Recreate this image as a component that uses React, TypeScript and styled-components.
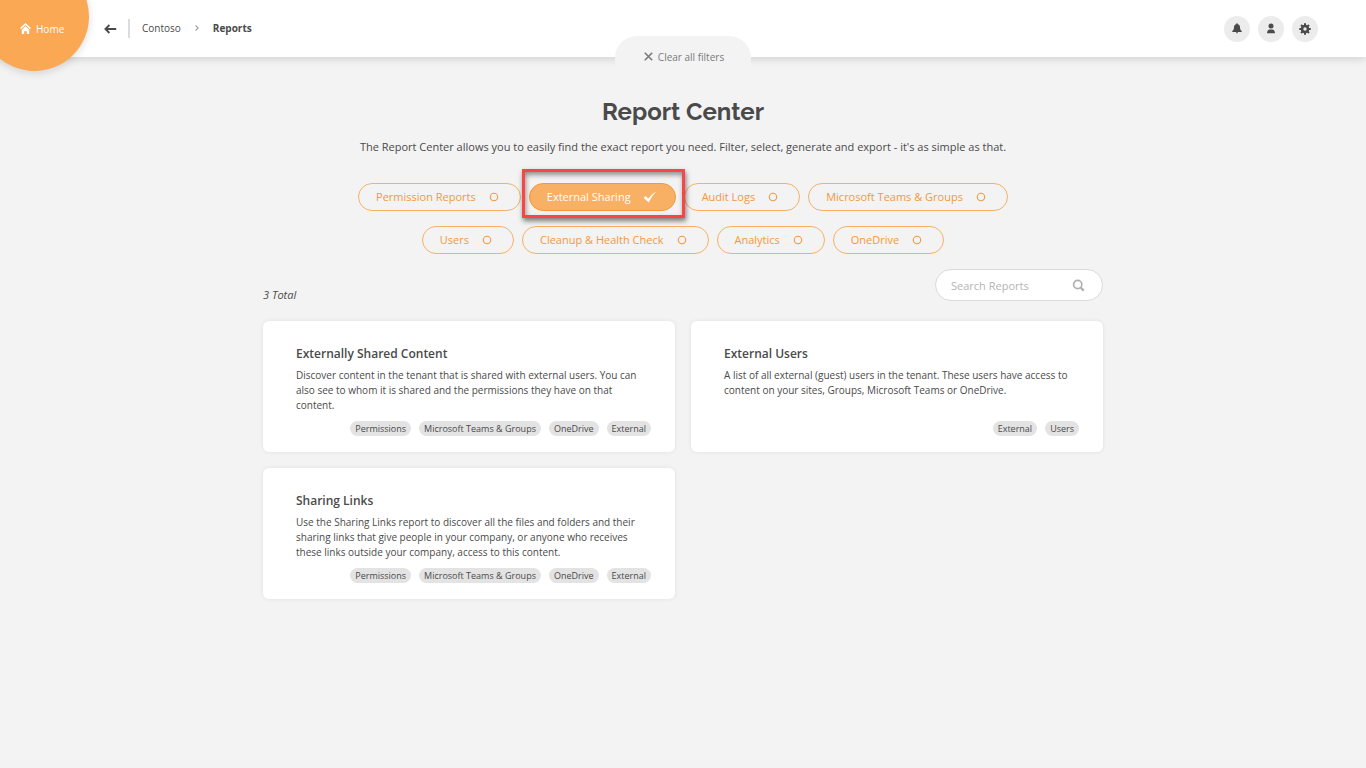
import React, { useState } from "react";
import styled, { createGlobalStyle, css } from "styled-components";

const color = {
  page: "#f3f3f3",
  text: "#4a4a4a",
  muted: "#7a7a7a",
  accent: "#f5983a",
  home: "#faa853",
  chip: "#f7b064",
};

const GlobalStyle = createGlobalStyle`
  *, *::before, *::after { box-sizing: border-box; }
  body {
    margin: 0;
    background: ${color.page};
    color: ${color.text};
    font-family: "Segoe UI", "Open Sans", sans-serif;
    font-size: 11px;
  }
  h1, h2, p, ul, ol { margin: 0; padding: 0; }
  button, input { font: inherit; color: inherit; }
  a { color: inherit; text-decoration: none; }
`;

const Header = styled.header`
  position: relative;
  display: flex;
  align-items: center;
  justify-content: space-between;
  height: 57px;
  padding: 0 48px 0 104px;
  background: #fff;
  box-shadow: 0 2px 8px rgba(0, 0, 0, 0.14);
`;

const HomeLink = styled.a`
  position: absolute;
  left: -20px;
  top: -38px;
  width: 109px;
  height: 109px;
  padding: 24px 0 0 40px;
  display: flex;
  align-items: center;
  gap: 5px;
  border-radius: 50%;
  background: ${color.home};
  color: #fff;
  font-size: 10px;
  font-weight: 500;
  box-shadow: 0 2px 8px rgba(0, 0, 0, 0.14);
`;

const Trail = styled.nav`
  display: flex;
  align-items: center;
  font-size: 10px;
`;

const BackButton = styled.button`
  display: flex;
  padding: 0;
  border: 0;
  background: none;
  cursor: pointer;
`;

const Divider = styled.span`
  width: 2px;
  height: 19px;
  margin: 0 12px 0 11px;
  background: #dcdcdc;
`;

const Crumbs = styled.ol`
  display: flex;
  align-items: center;
  gap: 14px;
  padding-bottom: 1px;
  list-style: none;

  li { display: flex; align-items: center; gap: 14px; }
  [aria-current] { font-weight: 700; }
`;

const Actions = styled.div`
  display: flex;
  gap: 8px;
`;

const RoundButton = styled.button`
  display: flex;
  align-items: center;
  justify-content: center;
  width: 26px;
  height: 26px;
  padding: 0;
  border: 0;
  border-radius: 50%;
  background: #ececec;
  cursor: pointer;
`;

const ClearButton = styled.button`
  position: absolute;
  top: 36px;
  left: 50%;
  width: 136px;
  height: 41px;
  transform: translateX(-50%);
  display: flex;
  align-items: center;
  justify-content: center;
  gap: 5px;
  padding: 0 0 0 2px;
  border: 0;
  border-radius: 22px 22px 0 0;
  background: ${color.page};
  color: ${color.muted};
  font-size: 10px;
  cursor: pointer;
`;

const Main = styled.main`
  max-width: 872px;
  margin: 0 auto;
  padding: 39px 16px 32px;
`;

const Title = styled.h1`
  font-family: Raleway, Lato, sans-serif;
  font-size: 24px;
  line-height: 32px;
  font-weight: 700;
  text-align: center;
`;

const Intro = styled.p`
  margin-top: 11px;
  line-height: 16px;
  text-align: center;
`;

const Filters = styled.div`
  display: flex;
  flex-wrap: wrap;
  justify-content: center;
  gap: 15px 8px;
  max-width: 680px;
  margin: 28px auto 15px;
`;

const Chip = styled.button<{ $on: boolean }>`
  position: relative;
  display: flex;
  align-items: center;
  gap: 12px;
  height: 28px;
  padding: 0 18px 1px 17px;
  border: 1px solid ${color.chip};
  border-radius: 14px;
  background: none;
  color: ${color.accent};
  cursor: pointer;

  ${(p) =>
    p.$on &&
    css`
      background: ${color.chip};
      border-color: ${color.accent};
      color: #fff;
    `}
`;

const Highlight = styled.span`
  position: absolute;
  z-index: 1;
  inset: -15px -10px -8px -8px;
  border: 3px solid #fb4444;
  box-shadow: 1px 3px 5px rgba(0, 0, 0, 0.5), inset 1px 3px 5px rgba(0, 0, 0, 0.4);
  pointer-events: none;
`;

const Toolbar = styled.div`
  display: flex;
  align-items: flex-end;
  justify-content: space-between;
  margin-bottom: 20px;
`;

const Total = styled.p`
  line-height: 12px;
  font-style: italic;
`;

const Search = styled.label`
  display: flex;
  align-items: center;
  width: 168px;
  height: 32px;
  padding: 0 17px 0 15px;
  border: 1px solid #dadada;
  border-radius: 16px;
  background: #fff;

  input {
    flex: 1;
    min-width: 0;
    padding: 0;
    border: 0;
    outline: 0;
    background: none;
  }
  input::placeholder { color: #b4b4b4; opacity: 1; }
`;

const Cards = styled.div`
  display: grid;
  grid-template-columns: repeat(auto-fill, minmax(340px, 1fr));
  gap: 16px;
`;

const Card = styled.article`
  display: flex;
  flex-direction: column;
  padding: 24px 24px 16px 33px;
  border-radius: 6px;
  background: #fff;
  box-shadow: 0 0 4px rgba(0, 0, 0, 0.08);
`;

const CardTitle = styled.h2`
  font-size: 12px;
  line-height: 18px;
  font-weight: 600;
`;

const CardText = styled.p`
  flex: 1;
  min-height: 45px;
  margin: 5px 6px 8px 0;
  font-size: 10px;
  line-height: 15px;
`;

const Tags = styled.ul`
  display: flex;
  flex-wrap: wrap;
  justify-content: flex-end;
  gap: 8px;
  list-style: none;
`;

const Tag = styled.li`
  padding: 0 5px;
  border-radius: 8px;
  background: #e3e3e3;
  font-size: 9px;
  line-height: 15px;
`;

const HomeIcon = () => (
  <svg width="11" height="11" viewBox="0 0 11 11" aria-hidden="true">
    <path d="M.6 5.6 5.5 1l4.9 4.6" fill="none" stroke="#fff" strokeWidth="1.5" />
    <path d="M5.5 3.3 9.2 6.7V11H6.8V8.2H4.2V11H1.8V6.7z" fill="#fff" />
  </svg>
);

const BackIcon = () => (
  <svg width="13" height="10" viewBox="0 0 13 10" fill="none" stroke="#4a4a4a" strokeWidth="1.8" aria-hidden="true">
    <path d="M12.2 5H1.8M5.4 1 1.4 5l4 4" />
  </svg>
);

const ChevronIcon = () => (
  <svg width="4" height="6" viewBox="0 0 4 6" fill="none" stroke="#a0a0a0" strokeWidth="1.1" aria-hidden="true">
    <path d="M.5.5 3.2 3 .5 5.5" />
  </svg>
);

const BellIcon = () => (
  <svg width="10" height="11" viewBox="0 0 10 11" fill="#4a4a4a" aria-hidden="true">
    <path d="M5 .3c.6 0 .9.4.9.9C7.5 1.6 8 2.9 8 4.3 8 6.3 8.5 7 9.7 8v.9H.3V8C1.5 7 2 6.3 2 4.3 2 2.9 2.5 1.6 4.1 1.2 4.1.7 4.4.3 5 .3zM3.9 9.3h2.2C6 10 5.6 10.4 5 10.4S4 10 3.9 9.3z" />
  </svg>
);

const UserIcon = () => (
  <svg width="10" height="11" viewBox="0 0 10 11" fill="#4a4a4a" aria-hidden="true">
    <circle cx="5" cy="3" r="2.5" />
    <path d="M1 10.3C1 7.9 2.4 6.9 3.6 6.6h2.8C7.6 6.9 9 7.9 9 10.3z" />
  </svg>
);

const GearIcon = () => (
  <svg width="12" height="12" viewBox="0 0 12 12" fill="none" stroke="#4a4a4a" aria-hidden="true">
    <circle cx="6" cy="6" r="3" strokeWidth="2.6" />
    <path
      d="M6 .3v2M6 9.7v2M.3 6h2M9.7 6h2M2 2l1.4 1.4M8.600 8.600 10 10M2 10l1.4-1.4M8.600 3.400 10 2"
      strokeWidth="2"
    />
  </svg>
);

const CrossIcon = () => (
  <svg width="9" height="9" viewBox="0 0 9 9" fill="none" stroke="#7a7a7a" strokeWidth="1.6" aria-hidden="true">
    <path d="m.8.8 7.4 7.4M8.2.8.8 8.2" />
  </svg>
);

const RingIcon = () => (
  <svg width="14" height="10" viewBox="0 0 14 10" fill="none" stroke="currentColor" strokeWidth="1.1" aria-hidden="true">
    <circle cx="6" cy="5" r="3.7" />
  </svg>
);

const CheckIcon = () => (
  <svg width="14" height="12" viewBox="0 0 14 12" fill="#fff" aria-hidden="true">
    <path d="M.5 6.8 2.8 5 5.3 7.8C7.3 4.9 9.8 2.3 13.4.4 10.1 3.7 7.9 7 5.7 11.6z" />
  </svg>
);

const SearchIcon = () => (
  <svg width="13" height="13" viewBox="0 0 13 13" fill="none" stroke="#b0b0b0" aria-hidden="true">
    <circle cx="5.7" cy="5.5" r="4.1" strokeWidth="1.7" />
    <path d="m8.8 8.6 3 3" strokeWidth="2.2" />
  </svg>
);

const filterNames = [
  "Permission Reports",
  "External Sharing",
  "Audit Logs",
  "Microsoft Teams & Groups",
  "Users",
  "Cleanup & Health Check",
  "Analytics",
  "OneDrive",
];

const sharedTags = ["Permissions", "Microsoft Teams & Groups", "OneDrive", "External"];

const reports = [
  {
    title: "Externally Shared Content",
    text: "Discover content in the tenant that is shared with external users. You can also see to whom it is shared and the permissions they have on that content.",
    tags: sharedTags,
  },
  {
    title: "External Users",
    text: "A list of all external (guest) users in the tenant. These users have access to content on your sites, Groups, Microsoft Teams or OneDrive.",
    tags: ["External", "Users"],
  },
  {
    title: "Sharing Links",
    text: "Use the Sharing Links report to discover all the files and folders and their sharing links that give people in your company, or anyone who receives these links outside your company, access to this content.",
    tags: sharedTags,
  },
];

export default function App() {
  const [active, setActive] = useState<string[]>(["External Sharing"]);
  const toggle = (name: string) =>
    setActive((list) => (list.includes(name) ? list.filter((n) => n !== name) : [...list, name]));

  return (
    <>
      <GlobalStyle />
      <Header>
        <HomeLink href="#home">
          <HomeIcon />
          Home
        </HomeLink>
        <Trail aria-label="Breadcrumb">
          <BackButton aria-label="Back">
            <BackIcon />
          </BackButton>
          <Divider />
          <Crumbs>
            <li>
              <a href="#contoso">Contoso</a>
              <ChevronIcon />
            </li>
            <li aria-current="page">Reports</li>
          </Crumbs>
        </Trail>
        <Actions>
          <RoundButton aria-label="Notifications">
            <BellIcon />
          </RoundButton>
          <RoundButton aria-label="Account">
            <UserIcon />
          </RoundButton>
          <RoundButton aria-label="Settings">
            <GearIcon />
          </RoundButton>
        </Actions>
        <ClearButton onClick={() => setActive([])}>
          <CrossIcon />
          Clear all filters
        </ClearButton>
      </Header>
      <Main>
        <Title>Report Center</Title>
        <Intro>
          The Report Center allows you to easily find the exact report you need. Filter, select, generate and export -
          it's as simple as that.
        </Intro>
        <Filters>
          {filterNames.map((name) => {
            const on = active.includes(name);
            return (
              <Chip key={name} $on={on} aria-pressed={on} onClick={() => toggle(name)}>
                {name}
                {on ? <CheckIcon /> : <RingIcon />}
                {on && name === "External Sharing" && <Highlight />}
              </Chip>
            );
          })}
        </Filters>
        <Toolbar>
          <Total>3 Total</Total>
          <Search>
            <input type="search" placeholder="Search Reports" aria-label="Search Reports" />
            <SearchIcon />
          </Search>
        </Toolbar>
        <Cards>
          {reports.map((report) => (
            <Card key={report.title}>
              <CardTitle>{report.title}</CardTitle>
              <CardText>{report.text}</CardText>
              <Tags>
                {report.tags.map((tag) => (
                  <Tag key={tag}>{tag}</Tag>
                ))}
              </Tags>
            </Card>
          ))}
        </Cards>
      </Main>
    </>
  );
}
